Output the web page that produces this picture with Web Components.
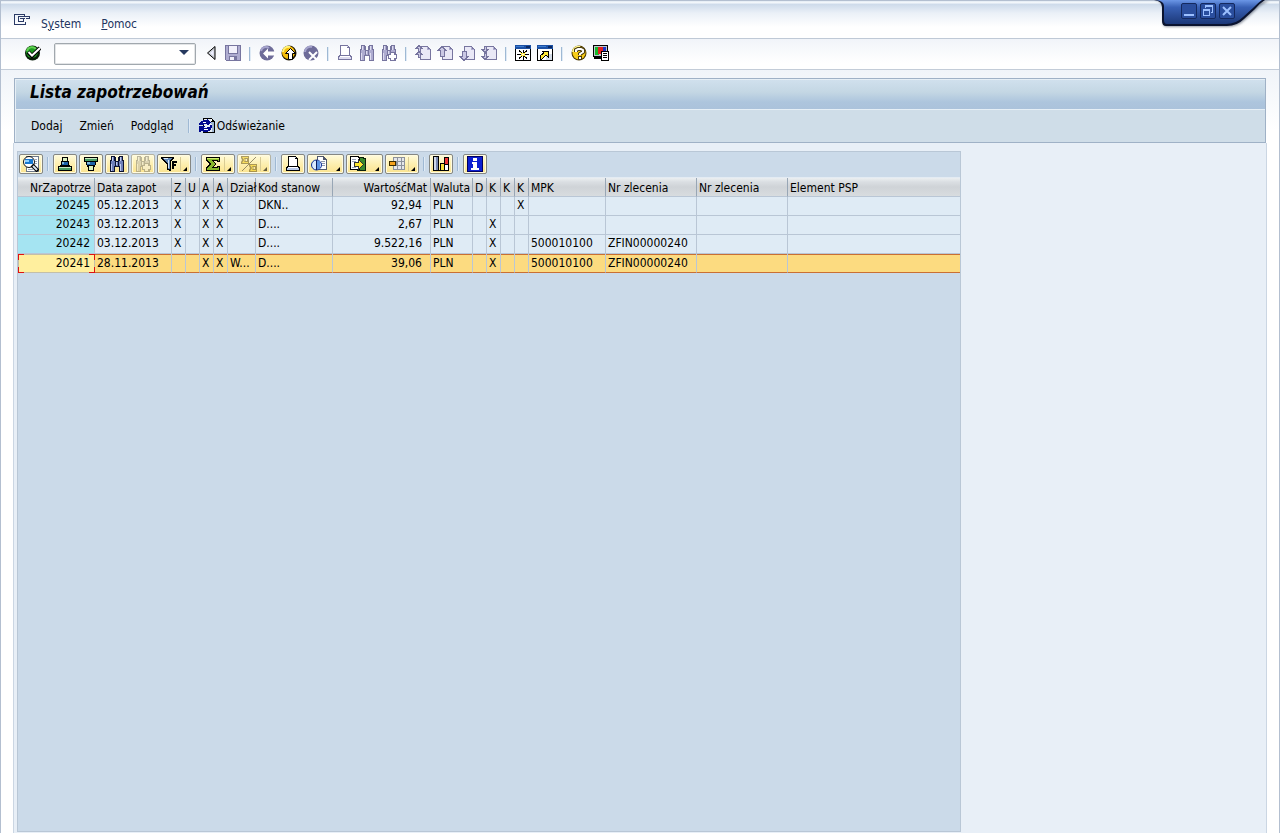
<!DOCTYPE html>
<html lang="pl">
<head>
<meta charset="utf-8">
<title>Lista zapotrzebowań</title>
<style>
html, body { margin: 0; height: 100%; }
body { font: 12px/18px "DejaVu Sans Condensed", "Noto Sans", sans-serif; color: #000; background: #fff; }
</style>
</head>
<body>
<sap-window>
  <sap-window-controls slot="controls"></sap-window-controls>
  <sap-menu-bar slot="menu"></sap-menu-bar>
  <sap-system-bar slot="system"></sap-system-bar>
  <sap-app-header slot="header" heading="Lista zapotrzebowań">
    <sap-app-action>Dodaj</sap-app-action>
    <sap-app-action>Zmień</sap-app-action>
    <sap-app-action>Podgląd</sap-app-action>
    <sap-separator></sap-separator>
    <sap-app-action icon="refresh">Odświeżanie</sap-app-action>
  </sap-app-header>
  <sap-grid>
    <sap-grid-toolbar slot="toolbar"></sap-grid-toolbar>
    <sap-grid-table></sap-grid-table>
  </sap-grid>
</sap-window>

<script>
/* ---------- icon drawings, all on a 16 x 16 grid ---------- */
const muted = { line: '#77759f', fill: '#dedcf0', mid: '#aeacd0' };

const binoculars = (line, fill, mid) => `
  <path fill="${line}" d="M2 0h4v1h1v4h2V1h1V0h4v4h1v12h-5v-5H6v5H1V4h1z"/>
  <path fill="${mid}" d="M3 1h2v4h1v5H5v5H2V5h1zM11 1h2v4h1v10h-3v-5h-1V5h1zM7 6h2v4H7z"/>
  <path fill="${fill}" d="M3 1h1v4H3zM11 1h1v4h-1zM2 8h1v7H2zM11 8h1v7h-1zM7 6h1v3H7z"/>`;
const plusMark = (line, fill) => `
  <path fill="${line}" d="M9 7h5v2h2v5h-2v2H9v-2H7V9h2z"/>
  <path fill="${fill}" d="M10 8h3v2h2v3h-2v2h-3v-2H8v-3h2z"/>`;
const printer = (line, fill) => `
  <path fill="${line}" d="M3 0h8v1h1v1h1v8h1v1h1v4H1v-4h1v-1h1z"/>
  <path fill="#fff" d="M4 1h6v2h2v7H4zM3 11h10v1H3z"/>
  <path fill="${fill}" d="M2 12h12v2H2zM10 1h1v1h-1z"/>`;
const page = `
  <path fill="${muted.line}" d="M5 1h8v1h1v1h1v1h1v11H5z"/>
  <path fill="#e9e8f6" d="M6 2h6v3h3v9H6z"/>
  <path fill="${muted.mid}" d="M12 2h1v2h2v1h-3z"/>`;
const pageArrow = d => page + `<path fill="#cbc9e4" stroke="${muted.line}" d="${d}"/>`;
const sheetWindow = inner => `
  <path fill="#000" d="M0 0h16v16H0z"/><path fill="#1c50a4" d="M0 0h16v4H0z"/>
  <path fill="#3b7cd0" d="M1 1h8v1H1z"/><path fill="#0a2860" d="M11 1h4v2h-4z"/>
  <path fill="#fff" d="M1 4h14v11H1z"/>${inner}`;

const ICONS = {
  command: `<path fill="none" stroke="#2a3a66" d="M10.500 3.500V2.500H.5v10h11V10M3.500 4.500h12v2h-4M4.500 4.500v5h5v-3M6 6.500h5"/>`,
  check: `<circle cx="7.500" cy="8" r="7.500" fill="#071c07"/><circle cx="7" cy="7" r="6" fill="#1d9a20"/>
    <path d="M2 6c1-4 6-5 9-2" stroke="#62d052" fill="none" stroke-width="2"/>
    <path d="M3 7l4 4 8-8" fill="none" stroke="#000" stroke-width="4"/>
    <path d="M3.500 7L7 10.500 15 3" fill="none" stroke="#fff" stroke-width="2"/>`,
  collapse: `<path d="M12 1.500v13L4.500 8z" fill="#c8ccd2" stroke="#000"/><path d="M10.500 5v6L7 8z" fill="#eef"/>`,
  save: `<path fill="${muted.line}" d="M0 0h16v16H1v-1H0z"/><path fill="${muted.mid}" d="M1 1h14v14H1z"/>
    <path fill="${muted.line}" d="M3 1h10v8H3z"/><path fill="#f2f1fb" d="M4 1h8v7H4z"/>
    <path fill="${muted.line}" d="M4 11h8v4H4z"/><path fill="#f2f1fb" d="M5 12h6v3H5z"/><path fill="${muted.line}" d="M9 12h2v3H9z"/>`,
  back: `<circle cx="8" cy="8" r="7.500" fill="#6e6c99"/><path d="M2 6c1-4 5-5 8-3" stroke="#a5a3cc" fill="none" stroke-width="2"/>
    <path fill="#fff" d="M4 8.500l5-5v3h7v4H9v3z"/>`,
  up: `<circle cx="8" cy="8" r="7.500" fill="#1b1400"/><circle cx="7.500" cy="7.500" r="6.500" fill="#f5bd0c"/>
    <path d="M2 7c0-4 4-6 7-5" stroke="#fff27a" fill="none" stroke-width="2"/>
    <path fill="#fff" stroke="#000" d="M9.500 3.500l5 5h-3v6h-4v-6h-3z"/>`,
  exit: `<circle cx="8" cy="8" r="7.500" fill="#6e6c99"/><path d="M2 7c0-4 4-6 7-5" stroke="#a5a3cc" fill="none" stroke-width="2"/>
    <path stroke="#fff" stroke-width="2" d="M6 7l8 8M14 7l-8 8"/>`,
  print: printer(muted.line, muted.fill),
  find: binoculars(muted.line, muted.fill, muted.mid),
  findnext: binoculars(muted.line, muted.fill, muted.mid) + plusMark(muted.line, '#fff'),
  first: pageArrow('M4 .5l3 3H5v3H3v-3H1zM4 6.500l3 3H5v3H3v-3H1z'),
  prev: pageArrow('M5 1.500l4 4H7v6H3v-6H1z'),
  next: page + `<path fill="#cbc9e4" stroke="${muted.line}" d="M5 15.500l-4-4h2v-5h4v5h2z"/>`,
  last: pageArrow('M4 7.500l-3-3h2v-3h2v3h2zM4 14.500l-3-3h2v-3h2v3h2z'),
  session: sheetWindow(`<path stroke="#000" fill="none" d="M8 5v10M2 9.500h12M4 5.500l8 8M12 5.500l-8 8"/>
    <path fill="#ffe83a" d="M6 8h4v3H6zM5 7h1v1H5zM10 7h1v1h-1zM5 11h1v1H5zM10 11h1v1h-1z"/><path fill="#fff" d="M7 9h2v1H7z"/>`),
  shortcut: sheetWindow(`<path fill="#d5dde8" d="M9 9h6v6H9z"/><path d="M3 14v-3l4-3-2-2h6v6L9 10l-4 4z" fill="#ffe83a" stroke="#000"/>`),
  help: `<circle cx="8" cy="8" r="7.500" fill="#4a3800"/><circle cx="8" cy="8" r="6.500" fill="#f8cd18"/>
    <path d="M2 7c0-4 4-6 7-5" stroke="#fff38a" fill="none" stroke-width="2"/>
    <path fill="none" stroke="#4a3c10" stroke-width="4" d="M5 7V5l2-1h3l2 1v2L9 9v1"/><path fill="#4a3c10" d="M7 11h4v4H7z"/>
    <path fill="none" stroke="#fff" stroke-width="2" d="M5 7V5l2-1h3l2 1v2L9 9v1"/><path fill="#fff" d="M8 12h2v2H8z"/>`,
  layout: `<path fill="#000" d="M0 0h15v12H0zM1 12h9v2H1z"/><path fill="#bfc6d0" d="M1 1h13v10H1z"/>
    <path fill="#17b82a" d="M2 2h4v8H2z"/><path fill="#e22020" d="M5 2h5v7H5z"/><path fill="#1c35c8" d="M10 2h3v5h-3z"/>
    <path fill="#000" d="M8 6h8v10H8z"/><path fill="#fff" d="M9 7h6v8H9z"/><path fill="#000" d="M10 8h4v1h-4zM10 10h4v1h-4zM10 12h4v1h-4z"/>`,
  refresh: `<path fill="#000" d="M4 0h9v1h1v1h1v1h1v12H4z"/><path fill="#e6edf4" d="M5 1h7v3h3v10H5z"/>
    <path fill="#9fb6d0" d="M12 4h3v10h-2V6h-1z"/><path fill="#fff" d="M12 1h1v2h-1z"/>
    <path fill="#00088f" d="M4 2h4V1h1v1h1v1h1v1h1v1h-1v1h-1v1H8V6H5v1H0V5h1V4h1V3h2zM0 8h6v1H5v1h3V9h3V7h2v3h-1v2h-1v1H9v1H4v-1H2v1H0z"/>
    <path fill="#fff" d="M4 4h3v1H4zM5 11h4v1H5z"/>`,
  details: `<path fill="#6d7888" d="M3 0h13v16H3z"/><path fill="#fff" d="M4 1h11v14H4z"/><path fill="#9aa8b8" d="M12 3h2v1h-2zM12 5h2v1h-2zM12 7h2v1h-2zM5 13h5v1H5z"/>
    <circle cx="6" cy="6" r="5.500" fill="#fff" stroke="#111"/><path fill="#1878d0" d="M2 3h8v5H2z"/><path fill="#8ed0ff" d="M2 4h4v2H2z"/>
    <path stroke="#000" stroke-width="4" d="M9 9l6 6"/><path stroke="#d8e4f0" stroke-width="2" d="M10 10l4 4"/>`,
  sortasc: `<path fill="#000" d="M5 1h6v4h1v4h1v1h2v5H1v-5h2V9h1V5h1z"/><path fill="#ddf2c0" d="M6 2h4v3H6z"/><path fill="#1e62a8" d="M5 6h6v3H5z"/><path fill="#80b8dc" d="M5 6h2v2H5z"/>
    <path fill="#4a9c64" d="M2 11h12v3H2z"/><path fill="#c8eac0" d="M2 11h12v1H2z"/>`,
  sortdesc: `<path fill="#000" d="M1 1h14v5h-2v3h-1v2h-1v4H5v-4H4V9H3V6H1z"/><path fill="#4a9c64" d="M2 2h12v3H2z"/><path fill="#c8eac0" d="M2 2h12v1H2z"/>
    <path fill="#1e62a8" d="M4 6h8v3H4z"/><path fill="#80b8dc" d="M4 6h3v2H4z"/><path fill="#ddf2c0" d="M6 10h4v4H6z"/>`,
  gfind: binoculars('#0c1230', '#c3cdf0', '#6e7fb8'),
  gfindnext: binoculars('#8f8b78', '#eeebd8', '#c3bfac') + plusMark('#8f8b78', '#f5f0d8'),
  filter: `<path fill="#000" d="M0 1h13v2h-1v1h-1v1h-1v10H8v-1H6V8H5V7H4V6H3V5H2V4H1V3H0z"/><path fill="#5f87b8" d="M2 2h9v1h-1v1H9v9H7V7H6V6H5V5H4V4H3V3H2z"/>
    <path fill="#dce9f6" d="M2 2h5v1H3zM7 4h1v8H7z"/><path fill="#000" d="M11 5h5v2h-3v1h2v2h-2v3h-2z"/>`,
  sum: `<path fill="#000" d="M1 1h14v5h-3V5H8l3 3-3 3h4v-1h3v5H1v-4l3-3-3-3z"/><path fill="#86b82c" d="M2 2h12v3h-1V4H6l4 4-4 4h7v-1h1v3H2v-2l4-4-4-4z"/><path fill="#d4ec70" d="M2 2h12v1H2z"/>`,
  subtotal: `<path stroke="#554e3a" d="M1 15L15 1"/><path fill="#76601c" d="M0 0h8v4H6V3H4l1 1-1 1h2V4h2v4H0V6l1-2-1-2zM8 8h8v4h-2v-1h-2l1 1-1 1h2v-1h2v4H8v-2l1-2-1-2z"/>
    <path fill="#f5d020" d="M1 1h6v1H3l1 2-1 2h4v1H1l2-3zM9 9h6v1h-4l1 2-1 2h4v1H9l2-3z"/>`,
  gprint: printer('#000', '#b9c9ea'),
  preview: `<path fill="#50586c" d="M6 0h7v1h1v1h1v1h1v11H6z"/><path fill="#fff" d="M7 1h5v3h3v9H7z"/><path fill="#8c96aa" d="M10 5h4v1h-4zM10 7h4v1h-4zM11 9h3v1h-3z"/>
    <circle cx="5.500" cy="9" r="5" fill="#dbeaff" stroke="#0b2d98"/><path fill="#5d93e4" d="M5 5h4v8H5z"/><path fill="#0b1d60" d="M5 4h1v10H5z"/>`,
  export: `<path fill="#0a1f0a" d="M7 1h7v1h2v13H7z"/><path fill="#3b8a2c" d="M8 2h5v1h2v11H8z"/>
    <path fill="#000" d="M0 0h8l2 2v12H0z"/><path fill="#fff" d="M1 1h6l2 2v10H1z"/><path fill="#9aa4b8" d="M2 3h4v1H2zM2 5h4v1H2zM2 11h4v1H2z"/>
    <path d="M4.500 6.500h4v-3l5 5-5 5v-3h-4z" fill="#ffe92e" stroke="#333"/>`,
  gridlayout: `<path fill="#8d929c" d="M4 1h12v13H4z"/><path fill="#e4e6ea" d="M5 2h3v3H5zM9 2h3v3H9zM13 2h2v3h-2zM5 10h3v3H5zM9 10h3v3H9zM13 10h2v3h-2zM9 6h3v3H9zM13 6h2v3h-2z"/>
    <path fill="#3b2c00" d="M0 5h7v5H0z"/><path fill="#f6a21c" d="M1 6h5v3H1z"/>`,
  chart: `<path fill="#000" d="M0 0h6v14h1V7h4V1h5v14H0z"/><path fill="#cfd8ea" d="M1 1h2v13H1z"/><path fill="#7888b0" d="M3 1h2v13H3z"/>
    <path fill="#f8e23a" d="M8 8h3v6H8z"/><path fill="#e33" d="M12 2h3v6h-3z"/><path fill="#fff" d="M12 9h3v5h-3z"/>`,
  info: `<path fill="#000060" d="M0 0h16v16H0z"/><path fill="#0d1fd0" d="M1 1h14v14H1z"/><path fill="#fff" d="M6 2h4v3H6zM5 6h5v6h2v2H4v-2h2V8H5z"/>`
};

/* ---------- base class ---------- */
class SapElement extends HTMLElement {
  constructor() {
    super();
    this.attachShadow({ mode: 'open' });
  }
  connectedCallback() {
    if (!this.shadowRoot.firstChild) this.shadowRoot.innerHTML = this.render();
  }
}

const BUTTON_RESET = `button { font: inherit; color: inherit; margin: 0; padding: 0; border: 0; background: none; cursor: pointer; }`;

customElements.define('sap-icon', class extends SapElement {
  render() {
    const name = this.getAttribute('name');
    const smooth = ['check', 'back', 'up', 'exit', 'help', 'collapse', 'details', 'preview', 'subtotal'].includes(name);
    return `<style>:host { display: block; width: 16px; height: 16px; flex: none; } svg { display: block; }</style>
      <svg width="16" height="16" viewBox="0 0 16 16" aria-hidden="true" shape-rendering="${smooth ? 'auto' : 'crispEdges'}">${ICONS[name]}</svg>`;
  }
});

customElements.define('sap-separator', class extends SapElement {
  render() {
    return `<style>
      :host { display: flex; justify-content: center; align-items: center; flex: none; width: 12px; }
      span { width: 1px; height: 14px; background: #9fb9d4; border-right: 1px solid #dfeaf5; }
    </style><span></span>`;
  }
});

/* ---------- window frame ---------- */
customElements.define('sap-window', class extends SapElement {
  render() {
    return `<style>
      :host { display: flex; flex-direction: column; position: relative; box-sizing: border-box; min-height: 100vh;
        border: solid #b3bfd0; border-width: 1px 1px 0; background: #fff; }
      .body { display: flex; flex-direction: column; flex: 1; margin: 0 12px; border: solid #cbd6e3; border-width: 0 1px;
        background: #e8eff7; padding: 8px 3px 1px; }
      .head { padding: 8px 13px 0; background: linear-gradient(#f0f4f9, #fff 60px); }
    </style>
    <slot name="menu"></slot>
    <slot name="system"></slot>
    <div class="head"><slot name="header"></slot></div>
    <main class="body"><slot></slot></main>
    <slot name="controls"></slot>`;
  }
});

customElements.define('sap-window-controls', class extends SapElement {
  render() {
    return `<style>
      :host { position: absolute; top: -1px; right: 13px; width: 108px; height: 32px; }
      ${BUTTON_RESET}
      .shape { position: absolute; inset: 0; overflow: visible; }
      .row { position: relative; display: flex; gap: 3px; padding: 3px 0 0 23px; }
      button { width: 16px; height: 16px; box-sizing: border-box; border: 1px solid #14295f; border-radius: 2px; background: #2a4e9e; }
      button svg { display: block; }
    </style>
    <svg class="shape" width="108" height="32" viewBox="0 0 108 32" aria-hidden="true">
      <defs><linearGradient id="g" x2="0" y2="1"><stop offset="0" stop-color="#6b96e6"/><stop offset=".3" stop-color="#3860b4"/><stop offset="1" stop-color="#1c3878"/></linearGradient>
      <filter id="b" x="-10%" y="-10%" width="120%" height="140%"><feGaussianBlur stdDeviation="1.200"/></filter></defs>
      <path d="M-3 0q8 2 8 9v14q0 4 4 4h61q10 0 17-7l11-10q5-6 13-9z" fill="#333b4c" opacity=".5" filter="url(#b)"/>
      <path d="M-4 0q8 1 8 7v14q0 5 4 5h61q10 0 17-7l11-10q5-6 10-9z" fill="#0b1430"/>
      <path d="M-2 0q8 1 8 6v14q0 4 3 4h59q10 0 17-7l10-9q6-6 9-8z" fill="url(#g)"/>
    </svg>
    <div class="row">
      <button aria-label="Minimalizuj"><svg width="14" height="14"><path fill="#9cc0ff" d="M2 10h10v2H2z"/></svg></button>
      <button aria-label="Przywróć"><svg width="14" height="14" shape-rendering="crispEdges"><path fill="#9cc0ff" fill-rule="evenodd" d="M4 1h8v8h-2V8h1V3H5v1H4zM2 5h7v7H2zM3 7v4h5V7z"/></svg></button>
      <button aria-label="Zamknij"><svg width="14" height="14"><path stroke="#9cc0ff" stroke-width="2" d="M3 3l8 8M11 3l-8 8"/></svg></button>
    </div>`;
  }
});

customElements.define('sap-menu-bar', class extends SapElement {
  render() {
    return `<style>
      :host { display: block; height: 37px; border-bottom: 1px solid #bfc9d6;
        background: linear-gradient(#e3ebf4 0, #f7fafd 2px, #cddaea 3px, #eaf0f7 12px, #fff 26px); }
      ${BUTTON_RESET}
      nav { display: flex; align-items: center; height: 37px; padding: 8px 0 0 13px; box-sizing: border-box; color: #233560; }
      button { margin-right: 20px; }
      .cmd { margin: 0 11px 8px 0; }
    </style>
    <nav><button class="cmd" aria-label="Menu okna"><sap-icon name="command"></sap-icon></button><button>S<u>y</u>stem</button><button><u>P</u>omoc</button></nav>`;
  }
});

customElements.define('sap-system-bar', class extends SapElement {
  render() {
    const tools = [['save', 'Zapisz'], null, ['back', 'Wstecz'], ['up', 'Zakończ'], ['exit', 'Przerwij'], null,
      ['print', 'Drukuj'], ['find', 'Szukaj'], ['findnext', 'Szukaj dalej'], null,
      ['first', 'Pierwsza strona'], ['prev', 'Poprzednia strona'], ['next', 'Następna strona'], ['last', 'Ostatnia strona'], null,
      ['session', 'Nowy modus'], ['shortcut', 'Utwórz skrót'], null, ['help', 'Pomoc'], ['layout', 'Dopasuj układ']];
    const button = ([icon, label]) => `<button aria-label="${label}"><sap-icon name="${icon}"></sap-icon></button>`;
    return `<style>
      :host { display: flex; align-items: center; box-sizing: border-box; height: 31px; padding: 0 0 1px 21px; border-bottom: 1px solid #c3ccd8;
        background: linear-gradient(#f1f4f9, #fff 24px); }
      ${BUTTON_RESET}
      button { width: 22px; height: 24px; padding-bottom: 2px; box-sizing: border-box; display: flex; align-items: center; justify-content: center; flex: none; }
      .field { display: flex; box-sizing: border-box; width: 142px; height: 22px; margin: 0 4px 0 10px; border: 1px solid #a1a8ae; border-radius: 2px;
        background: #fff; box-shadow: inset 0 0 0 1px #e3e5e7; }
      .field button { height: 20px; }
      input { flex: 1; min-width: 0; border: 0; padding: 0 4px; background: none; font: inherit; outline: 0; }
    </style>
    ${button(['check', 'Enter'])}
    <div class="field"><input aria-label="Pole poleceń"><button aria-label="Historia poleceń"><svg width="10" height="5"><path fill="#26395f" d="M0 0h10L5 5z"/></svg></button></div>
    ${button(['collapse', 'Ukryj pole poleceń'])}
    ${tools.map(t => t ? button(t) : '<sap-separator></sap-separator>').join('')}`;
  }
});

/* ---------- application title and actions ---------- */
customElements.define('sap-app-header', class extends SapElement {
  render() {
    return `<style>
      :host { display: block; border: 1px solid #9fb1c6; box-shadow: inset 1px 1px #e6eff6; background: #cfdde8; }
      h1 { margin: 1px 0 0 1px; height: 29px; padding-left: 14px; font-size: 17px; line-height: 24px; font-weight: bold; font-style: italic;
        background: linear-gradient(#d0e0ed, #c4d7e4 12px, #adc5dd 22px, #abc2db); border-bottom: 1px solid #e6eff6; }
      div { display: flex; align-items: center; gap: 17px; height: 32px; padding-left: 16px; }
      ::slotted(sap-separator) { margin: 0 -13px 0 -8px; }
    </style>
    <h1>${this.getAttribute('heading')}</h1>
    <div role="toolbar"><slot></slot></div>`;
  }
});

customElements.define('sap-app-action', class extends SapElement {
  render() {
    const icon = this.getAttribute('icon');
    return `<style>
      :host { display: block; }
      ${BUTTON_RESET}
      button { display: flex; align-items: center; gap: 2px; }
    </style>
    <button>${icon ? `<sap-icon name="${icon}"></sap-icon>` : ''}<slot></slot></button>`;
  }
});

/* ---------- ALV grid ---------- */
customElements.define('sap-grid', class extends SapElement {
  render() {
    return `<style>
      :host { display: flex; flex-direction: column; flex: 1; box-sizing: border-box; width: 944px; max-width: 100%;
        border: 1px solid #b9c7d6; background: #cbdae9; }
    </style>
    <slot name="toolbar"></slot><slot></slot>`;
  }
});

customElements.define('sap-grid-toolbar', class extends SapElement {
  render() {
    const tools = [['details', 'Szczegóły'], null, ['sortasc', 'Sortuj rosnąco'], ['sortdesc', 'Sortuj malejąco'], ['gfind', 'Szukaj'],
      ['gfindnext', 'Szukaj dalej', 'off'], ['filter', 'Filtr', 'split'], null, ['sum', 'Suma', 'split'], ['subtotal', 'Sumy częściowe', 'split off'], null,
      ['gprint', 'Drukuj'], ['preview', 'Widoki', 'menu'], ['export', 'Eksport', 'menu'], ['gridlayout', 'Układ', 'split'], null,
      ['chart', 'Wykres'], null, ['info', 'Informacja']];
    return `<style>
      :host { display: flex; align-items: center; gap: 2px; box-sizing: border-box; height: 26px; padding: 0 0 1px 1px; border-bottom: 1px solid #e3ebf3; }
      ${BUTTON_RESET}
      button { display: flex; align-items: center; justify-content: space-between; box-sizing: border-box; flex: none; width: 24px; height: 20px; padding: 0 3px;
        border: 1px solid #858783; border-radius: 2px; box-shadow: inset 0 0 0 1px #fffbe0;
        background: linear-gradient(#fffbdc, #fdefb0 50%, #fbe38e); }
      .split { width: 34px; padding-right: 2px; }
      .menu { width: 37px; padding-right: 2px; }
      .split i { border-left: 1px solid #d8cb94; }
      i { display: flex; align-items: flex-end; justify-content: flex-end; width: 8px; height: 14px; padding-right: 1px; box-sizing: border-box; }
      i svg { display: block; }
      .off { border-color: #b5b3a2; }
      .off sap-icon, .off svg { opacity: .6; }
      sap-separator { width: 6px; }
    </style>
    ${tools.map(t => t ? `<button class="${t[2] || ''}" aria-label="${t[1]}"><sap-icon name="${t[0]}"></sap-icon>${/split|menu/.test(t[2]) ? '<i><svg width="4" height="4"><path d="M4 0v4H0z"/></svg></i>' : ''}</button>`
      : '<sap-separator></sap-separator>').join('')}`;
  }
});

customElements.define('sap-grid-table', class extends SapElement {
  render() {
    const columns = [['NrZapotrze', 77, 'num'], ['Data zapot', 77], ['Z', 14], ['U', 14], ['A', 14], ['A', 14], ['Dział', 28], ['Kod stanow', 77],
      ['WartośćMat', 98, 'num'], ['Waluta', 42], ['D', 14], ['K', 14], ['K', 14], ['K', 14], ['MPK', 77], ['Nr zlecenia', 91], ['Nr zlecenia', 91], ['Element PSP', 0]];
    const rows = [
      ['20245', '05.12.2013', 'X', '', 'X', 'X', '', 'DKN..', '92,94', 'PLN', '', '', '', 'X', '', '', '', ''],
      ['20243', '03.12.2013', 'X', '', 'X', 'X', '', 'D....', '2,67', 'PLN', '', 'X', '', '', '', '', '', ''],
      ['20242', '03.12.2013', 'X', '', 'X', 'X', '', 'D....', '9.522,16', 'PLN', '', 'X', '', '', '500010100', 'ZFIN00000240', '', ''],
      ['20241', '28.11.2013', '', '', 'X', 'X', 'W...', 'D....', '39,06', 'PLN', '', 'X', '', '', '500010100', 'ZFIN00000240', '', '']
    ];
    const kind = i => columns[i][2] ? ` class="${columns[i][2]}"` : '';
    return `<style>
      :host { display: block; }
      table { width: 100%; table-layout: fixed; border-collapse: separate; border-spacing: 0; }
      th, td { box-sizing: border-box; height: 19px; padding: 0 0 2px 2px; white-space: nowrap; text-align: left; font-weight: normal;
        line-height: 16px; border: solid #b9c6d5; border-width: 0 1px 1px 0; }
      th { padding: 2px 0 0 2px; background: linear-gradient(#eceff1, #dadee2 4px, #cfd3d7 9px, #d8dcdf); border-right-color: #98a6b5; }
      th:last-child, td:last-child { border-right: 0; }
      td { background: #dfebf5; }
      .num { text-align: right; padding-right: 3px; }
      td.num { padding-right: 8px; }
      td:first-child { padding-right: 4px; background: #a5e4f2; }
      .sel td { padding-top: 1px; padding-bottom: 1px; background: #fcdb80; border-bottom-color: #c96f34; box-shadow: inset 0 1px #c96f34; }
      .sel td:first-child { box-shadow: none; border: 0; padding-right: 5px; padding-bottom: 2px;
        background:
          linear-gradient(90deg, #e01010 6px, #c4bfa8 6px calc(100% - 6px), #e01010 calc(100% - 6px)) top / 100% 1px no-repeat,
          linear-gradient(90deg, #e01010 6px, #c4bfa8 6px calc(100% - 6px), #e01010 calc(100% - 6px)) bottom / 100% 1px no-repeat,
          linear-gradient(#e01010 6px, #c4bfa8 6px calc(100% - 6px), #e01010 calc(100% - 6px)) left / 1px 100% no-repeat,
          linear-gradient(#e01010 6px, #c4bfa8 6px calc(100% - 6px), #e01010 calc(100% - 6px)) right / 1px 100% no-repeat,
          #ffef9e; }
    </style>
    <table>
      <colgroup>${columns.map(c => c[1] ? `<col style="width:${c[1]}px">` : '<col>').join('')}</colgroup>
      <thead><tr>${columns.map((c, i) => `<th scope="col"${kind(i)}>${c[0]}</th>`).join('')}</tr></thead>
      <tbody>${rows.map((r, n) => `<tr${n === 3 ? ' class="sel"' : ''}>${r.map((v, i) => `<td${kind(i)}>${v}</td>`).join('')}</tr>`).join('')}</tbody>
    </table>`;
  }
});
</script>
</body>
</html>
